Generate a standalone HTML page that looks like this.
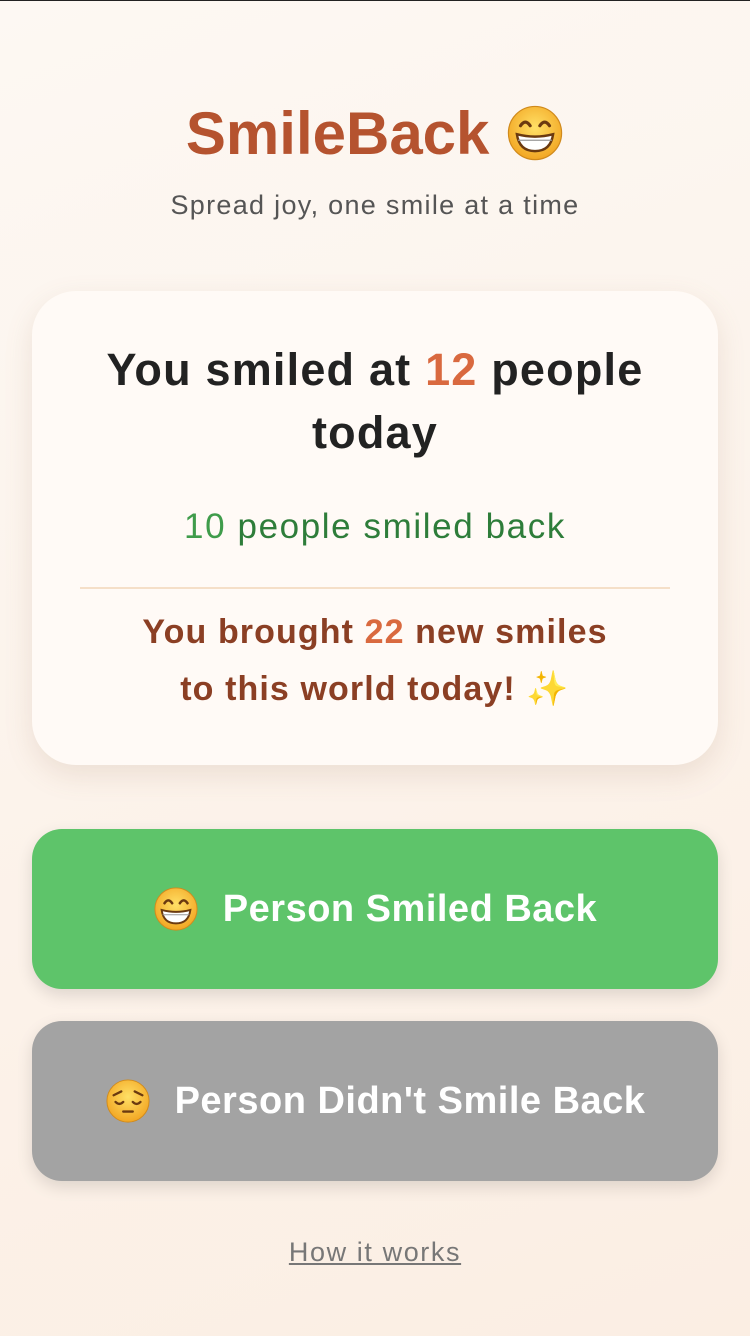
<!DOCTYPE html>
<html><head><meta charset="utf-8"><style>
*{margin:0;padding:0;box-sizing:border-box}
body{width:750px;height:1336px;overflow:hidden;background:linear-gradient(160deg,#fdf8f3,#fbeee3);font-family:"Liberation Sans",sans-serif;position:relative;border-top:1px solid #222}
.c{position:absolute;left:0;width:750px;text-align:center;white-space:nowrap}
.card{position:absolute;left:32px;top:290px;width:686px;height:474px;background:#fffaf6;border-radius:44px;box-shadow:0 10px 28px rgba(150,110,80,.15)}
.btn{position:absolute;left:32px;width:686px;height:160px;border-radius:30px;box-shadow:0 6px 16px rgba(0,0,0,.12);color:#fff;font-size:38px;font-weight:bold;letter-spacing:.5px;display:flex;align-items:center;justify-content:center;gap:24px}
svg{display:inline-block;vertical-align:middle}
</style></head><body>
<svg width="0" height="0" style="position:absolute"><defs>
<radialGradient id="g" cx="50%" cy="40%" r="60%"><stop offset="0" stop-color="#ffe066"/><stop offset="1" stop-color="#f2a623"/></radialGradient>
<symbol id="grin" viewBox="0 0 48 48"><circle cx="24" cy="24" r="22" fill="url(#g)" stroke="#d08a1c" stroke-width="1"/><path d="M12 18q4-6 8 0M28 18q4-6 8 0" stroke="#6b3a10" stroke-width="2.6" fill="none" stroke-linecap="round"/><path d="M9 25q15 4 30 0q-2 14-15 14t-15-14z" fill="#fff" stroke="#6b3a10" stroke-width="2"/><path d="M10 30h28" stroke="#999" stroke-width="1"/></symbol>
<symbol id="sad" viewBox="0 0 48 48"><circle cx="24" cy="24" r="22" fill="url(#g)" stroke="#d08a1c" stroke-width="1"/><path d="M9 18l8-4M39 18l-8-4M11 25q4 4 8 0M29 25q4 4 8 0M19 35h10" stroke="#6b3a10" stroke-width="2.4" fill="none" stroke-linecap="round"/></symbol>
</defs></svg>
<div class="c" style="top:98px;font-size:60px;font-weight:bold;color:#b5532f">SmileBack <svg width="58" height="58" style="margin-top:-10px"><use href="#grin"/></svg></div>
<div class="c" style="top:189px;font-size:27px;letter-spacing:1.3px;color:#555">Spread joy, one smile at a time</div>
<div class="card"></div>
<div class="c" style="top:343px;font-size:45px;font-weight:bold;letter-spacing:1.2px;color:#222">You smiled at <span style="color:#d9693f">12</span> people</div>
<div class="c" style="top:406px;font-size:45px;font-weight:bold;letter-spacing:1.2px;color:#222">today</div>
<div class="c" style="top:506px;font-size:35px;letter-spacing:1.6px;color:#2e7d3a"><span style="color:#3f9c4b">10</span> people smiled back</div>
<div style="position:absolute;left:80px;top:586px;width:590px;height:2px;background:#f5dfc8"></div>
<div class="c" style="top:612px;font-size:34px;font-weight:bold;letter-spacing:1.1px;color:#8b3f24">You brought <span style="color:#d9693f">22</span> new smiles</div>
<div class="c" style="top:668px;font-size:34px;font-weight:bold;letter-spacing:1.1px;color:#8b3f24">to this world today! <span style="color:#f5c842">✨</span></div>
<div class="btn" style="top:828px;background:#5ec46a"><svg width="46" height="46"><use href="#grin"/></svg><span>Person Smiled Back</span></div>
<div class="btn" style="top:1020px;background:#a3a3a3"><svg width="46" height="46"><use href="#sad"/></svg><span>Person Didn't Smile Back</span></div>
<div class="c" style="top:1236px;font-size:27px;letter-spacing:1.6px;color:#777;text-decoration:underline">How it works</div>
</body></html>
